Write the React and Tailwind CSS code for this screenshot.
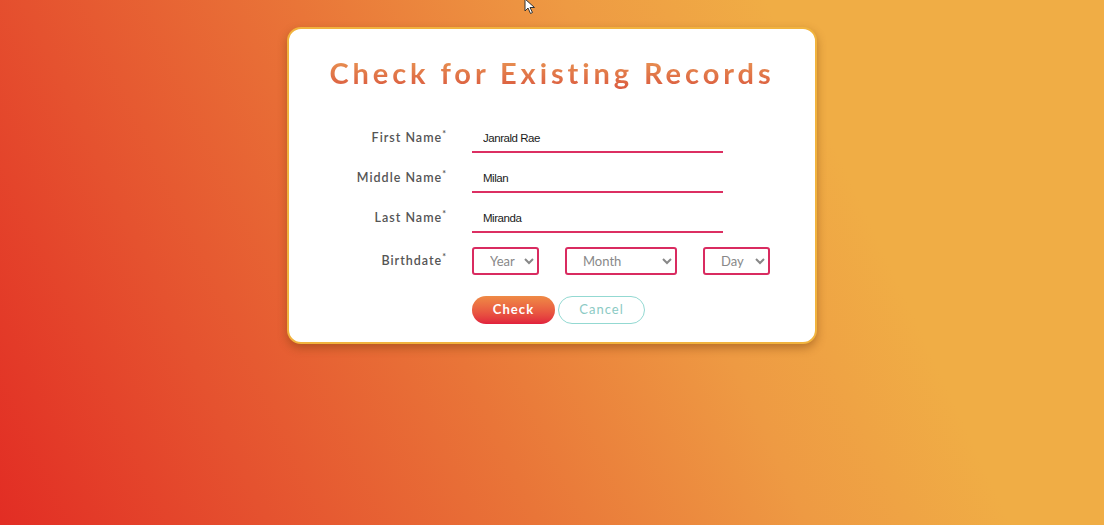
import React, { useState } from 'react';

const labelCls =
  "w-[183px] shrink-0 text-right pr-[25px] text-[12.5px] font-semibold tracking-[0.08em] text-[#555] font-['Lato',sans-serif]";

const inputCls =
  "w-[251px] h-[30px] pl-[11px] pr-[10px] pt-[2px] bg-transparent border-0 border-b-2 border-[#dc2f62] text-[11.5px] tracking-[-0.04em] text-[#1a1a1a] outline-none font-['Liberation_Sans',sans-serif]";

const selectCls =
  "h-[28px] border-2 border-[#d92b60] rounded-[3px] bg-white pl-[12px] pr-[4px] text-[13px] text-[#888] outline-none font-['Lato',sans-serif]";

const Field = ({ label, value, onChange }) => (
  <div className="flex items-center">
    <label className={labelCls}>
      {label}
      <sup className="text-[9px]">*</sup>
    </label>
    <input type="text" value={value} onChange={(e) => onChange(e.target.value)} className={inputCls} />
  </div>
);

const App = () => {
  const [firstName, setFirstName] = useState('Janrald Rae');
  const [middleName, setMiddleName] = useState('Milan');
  const [lastName, setLastName] = useState('Miranda');

  return (
    <div className="relative min-h-[525px] w-full bg-[linear-gradient(65deg,#e22d24_0%,#e5522f_20%,#e97538_40%,#ee9a43_60%,#f0ad45_75%,#f0ad45_100%)] pt-[27px]">
      {/* mouse pointer */}
      <svg className="absolute left-[524px] top-[-2px]" width="12" height="17" viewBox="0 0 12 17">
        <path d="M1 1 L1 13 L4 10 L6.5 15.5 L8.5 14.5 L6 9.5 L10.5 9.5 Z" fill="#fff" stroke="#333" strokeWidth="1" />
      </svg>

      <div className="mx-auto w-[530px] h-[317px] bg-white border-2 border-[#f1b33e] rounded-[14px] shadow-[0_4px_10px_rgba(120,60,10,0.45)]">
        <h1 className="mt-[26px] text-center text-[29px] font-bold tracking-[0.135em] leading-[36px] font-['Lato',sans-serif] bg-linear-to-b from-[#e99a55] to-[#d9553e] bg-clip-text text-transparent">
          Check for Existing Records
        </h1>

        <form className="mt-[32px] flex flex-col gap-[10px]" onSubmit={(e) => e.preventDefault()}>
          <Field label="First Name" value={firstName} onChange={setFirstName} />
          <Field label="Middle Name" value={middleName} onChange={setMiddleName} />
          <Field label="Last Name" value={lastName} onChange={setLastName} />

          <div className="flex items-center mt-[4px]">
            <label className={labelCls}>
              Birthdate
              <sup className="text-[9px]">*</sup>
            </label>
            <div className="flex gap-[26px]">
              <select className={`${selectCls} w-[67px]`} defaultValue="">
                <option value="">Year</option>
              </select>
              <select className={`${selectCls} w-[112px]`} defaultValue="">
                <option value="">Month</option>
              </select>
              <select className={`${selectCls} w-[67px]`} defaultValue="">
                <option value="">Day</option>
              </select>
            </div>
          </div>

          <div className="flex mt-[11px] pl-[183px] gap-[3px]">
            <button
              type="submit"
              className="w-[83px] h-[28px] rounded-full bg-linear-to-b from-[#ef8a45] to-[#e11f3d] text-white text-[13px] font-bold tracking-[0.08em] font-['Lato',sans-serif]"
            >
              Check
            </button>
            <button
              type="button"
              className="w-[87px] h-[28px] rounded-full border border-[#93d9d2] bg-white text-[#8ccac4] text-[13px] tracking-[0.08em] font-['Lato',sans-serif]"
            >
              Cancel
            </button>
          </div>
        </form>
      </div>
    </div>
  );
};

export default App;
